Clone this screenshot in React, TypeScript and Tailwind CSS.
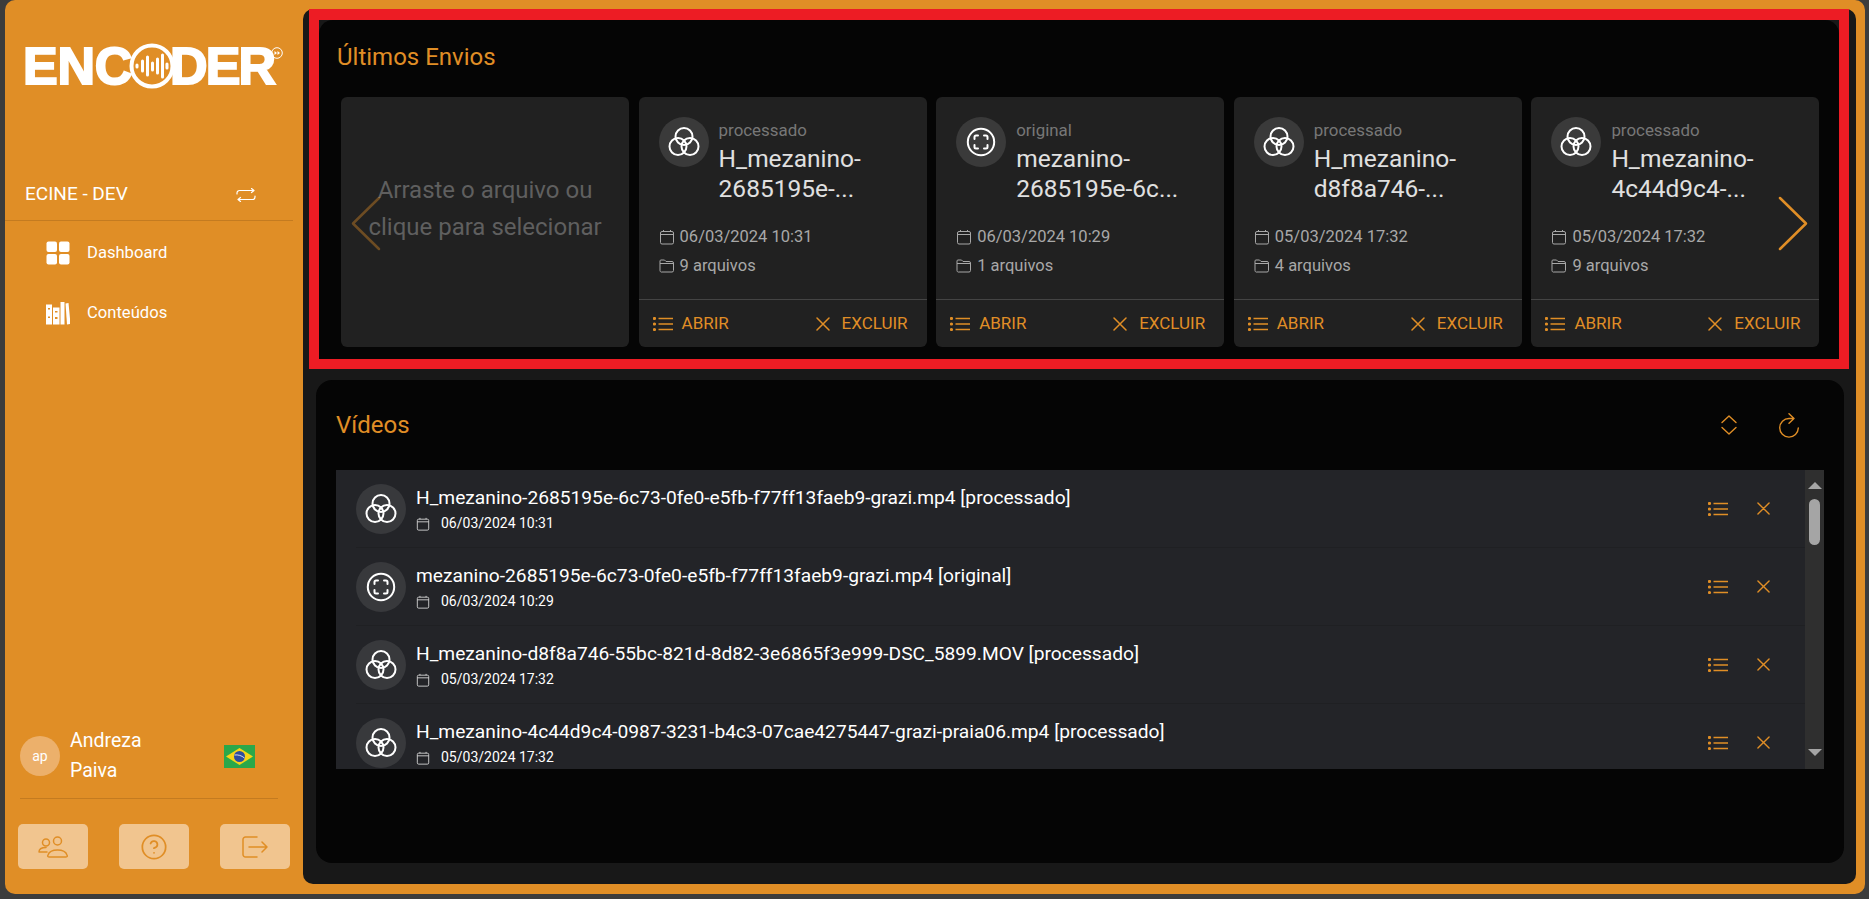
import React from "react";
import { CircleHelp } from "lucide-react";

const cards = [
  { kind: "processado", name: "H_mezanino-2685195e-...", date: "06/03/2024 10:31", files: "9 arquivos" },
  { kind: "original", name: "mezanino-2685195e-6c...", date: "06/03/2024 10:29", files: "1 arquivos" },
  { kind: "processado", name: "H_mezanino-d8f8a746-...", date: "05/03/2024 17:32", files: "4 arquivos" },
  { kind: "processado", name: "H_mezanino-4c44d9c4-...", date: "05/03/2024 17:32", files: "9 arquivos" },
];

const videos = [
  { kind: "processado", name: "H_mezanino-2685195e-6c73-0fe0-e5fb-f77ff13faeb9-grazi.mp4 [processado]", date: "06/03/2024 10:31" },
  { kind: "original", name: "mezanino-2685195e-6c73-0fe0-e5fb-f77ff13faeb9-grazi.mp4 [original]", date: "06/03/2024 10:29" },
  { kind: "processado", name: "H_mezanino-d8f8a746-55bc-821d-8d82-3e6865f3e999-DSC_5899.MOV [processado]", date: "05/03/2024 17:32" },
  { kind: "processado", name: "H_mezanino-4c44d9c4-0987-3231-b4c3-07cae4275447-grazi-praia06.mp4 [processado]", date: "05/03/2024 17:32" },
];

function KindIcon({ kind, className = "" }: { kind: string; className?: string }) {
  if (kind === "original") {
    return (
      <svg viewBox="0 0 32 32" fill="none" stroke="currentColor" strokeWidth="2" strokeLinecap="round" className={className}>
        <circle cx="16" cy="16" r="13.2" />
        <path d="M9.500 13v-2a1.500 1.500 0 0 1 1.500-1.500h2M19 9.500h2a1.500 1.500 0 0 1 1.500 1.500v2M22.500 19v2a1.500 1.500 0 0 1-1.500 1.500h-2M13 22.500h-2A1.500 1.500 0 0 1 9.500 21v-2" />
      </svg>
    );
  }
  return (
    <svg viewBox="0 0 32 32" fill="none" stroke="currentColor" strokeWidth="2" className={className}>
      <circle cx="16" cy="10.500" r="8.500" />
      <circle cx="10" cy="20.500" r="8.500" />
      <circle cx="22" cy="20.500" r="8.500" />
    </svg>
  );
}

function CalendarIcon({ className = "" }: { className?: string }) {
  return (
    <svg viewBox="0 0 16 16" fill="none" stroke="currentColor" strokeWidth="1" className={className}>
      <rect x="1.500" y="2.500" width="13" height="12.500" rx="1.500" />
      <path d="M1.500 5.500h13M4.500 1v1.500M11.500 1v1.500" />
    </svg>
  );
}

function FolderIcon({ className = "" }: { className?: string }) {
  return (
    <svg viewBox="0 0 16 16" fill="none" stroke="currentColor" strokeWidth="1" className={className}>
      <path d="M1 4V3a1 1 0 0 1 1-1h3.500l1.500 1.500h6a1.500 1.500 0 0 1 1.500 1.500v7.500a1.500 1.500 0 0 1-1.500 1.500h-10A1.500 1.500 0 0 1 1 12.500z" />
      <path d="M1 5.500h14" />
    </svg>
  );
}

function ListIcon({ className = "" }: { className?: string }) {
  return (
    <svg viewBox="0 0 20 14" className={className} fill="currentColor" stroke="currentColor" strokeWidth="1.600">
      <circle cx="1.500" cy="1.500" r="0.800" />
      <circle cx="1.500" cy="7" r="0.800" />
      <circle cx="1.500" cy="12.500" r="0.800" />
      <path d="M5.500 1.500H20M5.500 7H20M5.500 12.500H20" />
    </svg>
  );
}

function CrossIcon({ className = "" }: { className?: string }) {
  return (
    <svg viewBox="0 0 14 14" className={className} fill="none" stroke="currentColor" strokeWidth="1.500" strokeLinecap="round">
      <path d="M1 1l12 12M13 1L1 13" />
    </svg>
  );
}

function Logo() {
  return (
    <div className="flex items-center h-[46px] text-white font-['Liberation_Sans',sans-serif] font-bold text-[52px] [-webkit-text-stroke:2px_white] leading-none">
      <span className="tracking-[-0.300px]">ENC</span>
      <svg viewBox="0 0 46 46" className="w-[46px] h-[46px] -ml-[3px] -mr-[5px] shrink-0 relative" fill="none" stroke="white">
        <circle cx="23" cy="23" r="20.500" strokeWidth="4" fill="#e08e26" />
        <path d="M8 22v2M13.500 18v10M18.500 14v18M23.500 20v7M28.500 16v14M33.500 12v22M38 21v4" strokeWidth="3" strokeLinecap="round" />
      </svg>
      <span className="tracking-[-1.800px]">DER</span>
      <svg viewBox="0 0 12 12" className="w-3 h-3 self-start -ml-[3px] mt-[4px] shrink-0" fill="none" stroke="white" strokeWidth="1">
        <circle cx="6" cy="6" r="5.300" />
        <path d="M3.500 4l2.500 2-2.500 2zM6.500 4l2.500 2-2.500 2z" fill="white" stroke="none" />
      </svg>
    </div>
  );
}

function Sidebar() {
  return (
    <aside className="w-[298px] shrink-0 flex flex-col text-white">
      <div className="pl-[18px] pt-[34px] h-[158px]">
        <Logo />
      </div>
      <div className="h-[54px] flex items-center justify-between pl-5 pr-[37px] pt-[2px] border-b border-[#c47b20] mr-[10px]">
        <span className="text-[19px]">ECINE - DEV</span>
        <svg viewBox="0 0 20 14" className="w-5 h-[14px]" fill="none" stroke="white" strokeWidth="1.200" strokeLinecap="round" strokeLinejoin="round">
          <path d="M1 6V5a2.500 2.500 0 0 1 2.500-2.500H18M15.500 .500l2.500 2-2.500 2M19 8v1a2.500 2.500 0 0 1-2.500 2.500H2M4.500 9.500l-2.500 2 2.500 2" />
        </svg>
      </div>
      <nav className="flex flex-col pl-[41px] pt-[2px]">
        <a className="h-[60px] flex items-center gap-[17px] text-[16.600px]">
          <svg viewBox="0 0 24 24" className="w-6 h-6" fill="white">
            <rect x="0.500" y="0.500" width="10.500" height="10.500" rx="2" />
            <rect x="13" y="0.500" width="10.500" height="10.500" rx="2" />
            <rect x="0.500" y="13" width="10.500" height="10.500" rx="2" />
            <rect x="13" y="13" width="10.500" height="10.500" rx="2" />
          </svg>
          Dashboard
        </a>
        <a className="h-[60px] flex items-center gap-[17px] text-[16.600px]">
          <svg viewBox="0 0 24 24" className="w-6 h-6" fill="white">
            <path fillRule="evenodd" d="M0 3.500h6v20H0zM2 7v1.500h2V7zM2 15.500V17h2v-1.500z" />
            <path fillRule="evenodd" d="M7 6.500h6.500v17H7zM9 10v1.500h2.500V10zM9 16v2h2.500v-2z" />
            <path d="M14.500 1h4v22.500h-4z" />
            <path d="M19.500 2.500l3-.500 2 21-3.500.500z" />
          </svg>
          Conteúdos
        </a>
      </nav>
      <div className="mt-auto">
        <div className="ml-[15px] w-[258px] h-[63px] border-b border-[#c47b20] mb-[25px] flex items-start">
          <div className="w-10 h-10 rounded-full bg-[#ecb06b] flex items-center justify-center text-[14px] shrink-0">ap</div>
          <div className="ml-[10px] w-[90px] -mt-[10px] text-[19.500px] leading-[30px]">Andreza Paiva</div>
          <svg viewBox="0 0 31 23" className="w-[31px] h-[23px] ml-[64px] mt-[9px]">
            <rect width="31" height="23" fill="#2aa84a" />
            <path d="M15.500 3L29 11.500 15.500 20 2 11.500z" fill="#f7d417" />
            <circle cx="15.500" cy="11.500" r="5.500" fill="#2f4da0" />
            <path d="M10.500 10c3.500-.500 7 .500 10 3" stroke="white" strokeWidth="0.800" fill="none" />
          </svg>
        </div>
        <div className="pl-[13px] flex gap-[31px] pb-[15px]">
          <button className="w-[70px] h-[45px] rounded-[5px] bg-[#f1c58f] flex items-center justify-center text-[#e08e26]">
            <svg viewBox="0 0 30 22" className="w-[30px] h-[22px]" fill="none" stroke="currentColor" strokeWidth="1.500" strokeLinecap="round">
              <circle cx="8" cy="6.500" r="3.500" />
              <circle cx="19.500" cy="5" r="4" />
              <path d="M1 16c0-3 3-4.500 7-4.500M11 21c-1.500 0-1.500-1-1-2 1-3 5-5 9.500-5s8.500 2 9.500 5c.5 1 .5 2-1 2zM1 16h8" />
            </svg>
          </button>
          <button className="w-[70px] h-[45px] rounded-[5px] bg-[#f1c58f] flex items-center justify-center text-[#e08e26]">
            <CircleHelp className="w-7 h-7" strokeWidth={1.500} />
          </button>
          <button className="w-[70px] h-[45px] rounded-[5px] bg-[#f1c58f] flex items-center justify-center text-[#e08e26]">
            <svg viewBox="0 0 26 22" className="w-[26px] h-[22px]" fill="none" stroke="currentColor" strokeWidth="1.500" strokeLinecap="round" strokeLinejoin="round">
              <path d="M15 1H3.500A2.500 2.500 0 0 0 1 3.500v15A2.500 2.500 0 0 0 3.500 21H15M7 11h18M20 6l5 5-5 5" />
            </svg>
          </button>
        </div>
      </div>
    </aside>
  );
}

function UploadCard({ card }: { card: (typeof cards)[number] }) {
  return (
    <div className="w-[288px] h-[250px] shrink-0 rounded-[6px] bg-[#212121] flex flex-col">
      <div className="flex-1 pl-5 pt-5">
        <div className="flex gap-[10px]">
          <div className="w-[50px] h-[50px] rounded-full bg-[#3a3a3a] flex items-center justify-center text-white shrink-0">
            <KindIcon kind={card.kind} className="w-8 h-8" />
          </div>
          <div className="w-[195px]">
            <div className="text-[16.900px] leading-[26px] text-[#777777]">{card.kind}</div>
            <div className="mt-[1px] text-[24.500px] leading-[29.500px] text-[#e0e0e0]">{card.name}</div>
          </div>
        </div>
        <div className="mt-[20px] flex items-center gap-[5px] h-[28px] text-[16.500px] text-[#a8a8a8]">
          <CalendarIcon className="w-4 h-4" />
          {card.date}
        </div>
        <div className="flex items-center gap-[5px] h-[29px] pt-[1px] text-[16.500px] text-[#a8a8a8]">
          <FolderIcon className="w-4 h-4" />
          {card.files}
        </div>
      </div>
      <div className="h-[48px] border-t border-[#444444] flex items-center justify-between pl-[14px] pr-[19px] text-[17px] text-[#e08e26]">
        <span className="flex items-center gap-[9px]">
          <ListIcon className="w-5 h-[14px]" />
          ABRIR
        </span>
        <span className="flex items-center gap-[12px]">
          <CrossIcon className="w-[14px] h-[14px]" />
          EXCLUIR
        </span>
      </div>
    </div>
  );
}

function VideoRow({ video }: { video: (typeof videos)[number] }) {
  return (
    <div className="h-[78px] shrink-0 flex items-center border-b border-[#1f2023] ml-5 pr-[35px]">
      <div className="w-[50px] h-[50px] rounded-full bg-[#38393c] flex items-center justify-center text-white shrink-0">
        <KindIcon kind={video.kind} className="w-8 h-8" />
      </div>
      <div className="ml-[10px] flex-1 pt-[3px]">
        <div className="text-[19.200px] leading-[24px] text-white">{video.name}</div>
        <div className="mt-[3px] flex items-center gap-[11px] text-[14px] text-white">
          <CalendarIcon className="w-[14px] h-[14px] text-[#d8d8d8]" />
          {video.date}
        </div>
      </div>
      <div className="flex items-center gap-[29px] text-[#e08e26]">
        <ListIcon className="w-5 h-[14px]" />
        <CrossIcon className="w-[13px] h-[13px]" />
      </div>
    </div>
  );
}

export default function App() {
  return (
    <div className="h-[899px] bg-[#3c3c3c] pl-[5px] pr-[4px] pb-[5px] font-['Roboto',sans-serif] overflow-hidden">
      <div className="h-full bg-[#e08e26] rounded-[10px] flex pt-[9px] pr-[9px] pb-[10px]">
        <Sidebar />
        <main className="flex-1 bg-[#181818] rounded-[10px] flex flex-col">
          <div className="ml-[6px] mr-[7px] h-[360px] border-[10px] border-t-[11px] border-[#ed1c24] shrink-0">
            <section className="h-full bg-[#050505] rounded-t-[14px] pl-[18px] relative overflow-hidden">
              <h2 className="pt-[23px] h-[77px] text-[24px] leading-[28px] text-[#e08e26]">Últimos Envios</h2>
              <div className="pl-[4px] flex gap-[9.600px]">
                <div className="w-[288px] h-[250px] shrink-0 rounded-[6px] bg-[#212121] flex items-center justify-center text-center px-[20px] pb-[26px] text-[24px] leading-[37px] text-[#5f5f5f]">
                  Arraste o arquivo ou clique para selecionar
                </div>
                {cards.map((card, i) => (
                  <UploadCard key={i} card={card} />
                ))}
              </div>
              <svg viewBox="0 0 30 55" className="absolute left-[32px] top-[176px] w-[30px] h-[55px] text-[#e08e26] opacity-40" fill="none" stroke="currentColor" strokeWidth="2.500" strokeLinecap="round" strokeLinejoin="round">
                <path d="M28 2L2 27.500 28 53" />
              </svg>
              <svg viewBox="0 0 30 55" className="absolute right-[31px] top-[176px] w-[30px] h-[55px] text-[#e08e26]" fill="none" stroke="currentColor" strokeWidth="2.500" strokeLinecap="round" strokeLinejoin="round">
                <path d="M2 2l26 25.500L2 53" />
              </svg>
            </section>
          </div>
          <section className="ml-[13px] mr-[12px] mt-[11px] h-[483px] shrink-0 bg-[#050505] rounded-[16px] px-[20px]">
            <div className="h-[90px] flex items-center justify-between">
              <h2 className="text-[24px] text-[#e08e26]">Vídeos</h2>
              <div className="flex items-center gap-[42px] pr-[25px] text-[#e08e26]">
                <svg viewBox="0 0 16 20" className="w-4 h-5" fill="none" stroke="currentColor" strokeWidth="1.400" strokeLinecap="round" strokeLinejoin="round">
                  <path d="M1 7.500L8 1l7 6.500M1 12.500L8 19l7-6.500" />
                </svg>
                <svg viewBox="0 0 20 25" className="w-5 h-[25px]" fill="none" stroke="currentColor" strokeWidth="1.400" strokeLinecap="round" strokeLinejoin="round">
                  <path d="M19.300 15a9.300 9.300 0 1 1-9.300-9.500h5M10 .700l5 4.800-5 4.800" />
                </svg>
              </div>
            </div>
            <div className="h-[299px] bg-[#232428] flex overflow-hidden">
              <div className="flex-1 flex flex-col overflow-hidden">
                {videos.map((video, i) => (
                  <VideoRow key={i} video={video} />
                ))}
              </div>
              <div className="w-[19px] shrink-0 bg-[#2f2f2f] flex flex-col items-center">
                <div className="mt-[12px] w-0 h-0 border-x-[7px] border-x-transparent border-b-[7px] border-b-[#a5a5a5]" />
                <div className="mt-[10px] w-[11px] h-[46px] rounded-[6px] bg-[#a5a5a5]" />
                <div className="mt-auto mb-[13px] w-0 h-0 border-x-[7px] border-x-transparent border-t-[7px] border-t-[#a5a5a5]" />
              </div>
            </div>
          </section>
        </main>
      </div>
    </div>
  );
}
